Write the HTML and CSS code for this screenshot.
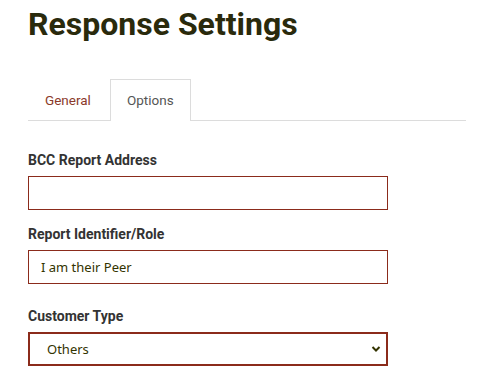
FILE: index.html
```html
<!DOCTYPE html>
<html>
<head>
<meta charset="utf-8">
<link rel="stylesheet" href="styles.css">
</head>
<body>
<div class="page">
  <h1 class="title">Response Settings</h1>
  <ul class="tabs">
    <li class="tab">General</li>
    <li class="tab active">Options</li>
  </ul>
  <form class="form">
    <div class="group">
      <label class="label">BCC Report Address</label>
      <input class="field" type="text" value="">
    </div>
    <div class="group">
      <label class="label">Report Identifier/Role</label>
      <input class="field" type="text" value="I am their Peer">
    </div>
    <div class="group group-select">
      <label class="label">Customer Type</label>
      <div class="select">
        <span class="select-value">Others</span>
        <svg class="chev" width="10" height="8" viewBox="0 0 10 8"><path d="M1.5 2 L5 5.5 L8.5 2" fill="none" stroke="#333300" stroke-width="2"/></svg>
      </div>
    </div>
  </form>
</div>
</body>
</html>
```
FILE: styles.css
```css
html, body { margin: 0; padding: 0; background: #fff; }
body { font-family: Roboto, "Liberation Sans", sans-serif; }
.page { padding: 0 35px 0 28px; width: 438px; }
.title {
  margin: 0; padding-top: 2px;
  font-size: 32px; font-weight: 700; color: #2a2a0c;
  line-height: 44px;
}
.tabs {
  list-style: none; margin: 33px 0 0 0; padding: 0;
  display: flex; border-bottom: 1px solid #dcdcdc;
}
.tab {
  height: 40px; line-height: 40px; padding: 0 16px;
  font-size: 13.5px; color: #8b3a2a; margin-right: 2px;
  border: 1px solid transparent; border-bottom: 0; margin-bottom: -1px;
}
.tab.active {
  color: #555; border-color: #dcdcdc; background: #fff; height: 41px;
}
.form { padding-top: 30px; }
.group { display: flex; flex-direction: column; margin-bottom: 15px; }
.group-select { padding-top: 8px; }
.label {
  font-size: 14px; font-weight: 700; color: #333; line-height: 18px; margin-bottom: 7px;
}
.field {
  box-sizing: border-box; width: 360px; height: 34px; margin: 0;
  border: 1px solid #8b2b1b; padding: 0 12px;
  font-family: "Noto Sans", sans-serif; font-size: 13px; color: #333300;
  outline: none;
}
.select {
  box-sizing: border-box; width: 360px; height: 34px;
  border: 2px solid #8b2b1b; padding: 0 5px 0 17px;
  display: flex; align-items: center; justify-content: space-between;
  font-family: "Noto Sans", sans-serif; font-size: 13px; color: #333300;
}
```
